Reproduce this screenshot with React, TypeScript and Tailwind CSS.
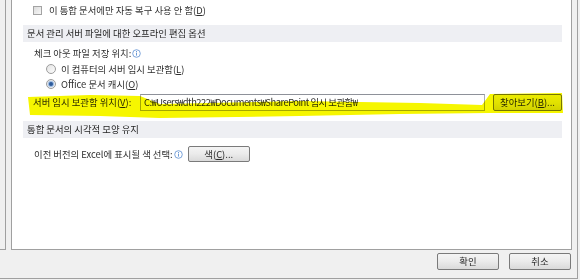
import React from "react";

const font = { fontFamily: "'Noto Sans CJK KR', 'Liberation Sans', sans-serif" };

function Info() {
  return (
    <svg width="9" height="9" viewBox="0 0 9 9" className="ml-[1px] inline-block">
      <circle cx="4.5" cy="4.5" r="3.8" fill="none" stroke="#6d9ad6" strokeWidth="0.9" />
      <rect x="4" y="3.6" width="1" height="3" fill="#6d9ad6" />
      <rect x="4" y="2" width="1" height="1" fill="#6d9ad6" />
    </svg>
  );
}

function Radio({ checked }: { checked?: boolean }) {
  return (
    <span className="flex h-[10px] w-[10px] items-center justify-center rounded-full border border-[#9c9c9c] bg-gradient-to-br from-[#e4e4e4] to-[#fbfbfb]">
      {checked && <span className="h-[4px] w-[4px] rounded-full bg-[#2d5b9a] shadow-[0_0_1px_1px_#8fb3e0]" />}
    </span>
  );
}

function Btn({ children, className = "" }: { children: React.ReactNode; className?: string }) {
  return (
    <div
      className={`flex items-center justify-center rounded-[2px] border border-[#7a7a7a] bg-gradient-to-b from-[#f4f4f4] via-[#ebebeb] to-[#dadada] text-[9.4px] text-[#2a2a2a] ${className}`}
    >
      {children}
    </div>
  );
}

export default function App() {
  return (
    <div className="relative h-[280px] w-[580px] overflow-hidden bg-[#f0f0f0]" style={font}>
      <div className="flex h-[279px] w-[578px] flex-col border-r border-b border-[#a0a0a0]">
        {/* 상단: 왼쪽 목록 + 내용 */}
        <div className="flex h-[250px]">
          <div className="w-[6px] border-r border-b border-[#a0a0a0]" />
          <div className="ml-[5px] flex w-[561px] flex-col border-l border-r border-b border-[#a0a0a0] bg-white pt-[3px] text-[9.4px] text-[#2e2e2e]">
            <div className="flex h-[14px] items-center pl-[21px]">
              <span className="h-[9px] w-[9px] border border-[#a3a3a3] bg-gradient-to-br from-[#dcdcdc] to-[#f7f7f7]" />
              <span className="ml-[7px]">
                이 통합 문서에만 자동 복구 사용 안 함(<u>D</u>)
              </span>
            </div>

            <div className="mt-[8px] mr-[9px] ml-[11px] flex h-[17px] items-center bg-[#eeeff3] pl-[4px] text-[#262626]">
              문서 관리 서버 파일에 대한 오프라인 편집 옵션
            </div>

            <div className="mt-[4px] flex h-[14px] items-center pl-[22px]">
              체크 아웃 파일 저장 위치:
              <Info />
            </div>
            <div className="mt-[2px] flex h-[14px] items-center pl-[34px]">
              <Radio />
              <span className="ml-[5px]">
                이 컴퓨터의 서버 임시 보관함(<u>L</u>)
              </span>
            </div>
            <div className="mt-[1px] flex h-[14px] items-center pl-[34px]">
              <Radio checked />
              <span className="ml-[5px]">
                Office 문서 캐시(<u>O</u>)
              </span>
            </div>

            <div className="mt-[3px] flex h-[17px] items-center pl-[21px]">
              <span className="w-[107px]">
                서버 임시 보관함 위치(<u>V</u>):
              </span>
              <div className="flex h-[17px] w-[345px] items-center border border-[#abadb3] border-t-[#8e9199] pl-[3px] tracking-[-0.5px]">
                C:₩Users₩dth222₩Documents₩SharePoint 임시 보관함₩
              </div>
              <Btn className="ml-[8px] h-[17px] w-[69px]">
                찾아보기(<u>B</u>)...
              </Btn>
            </div>

            <div className="mt-[10px] mr-[9px] ml-[11px] flex h-[17px] items-center bg-[#eeeff3] pl-[4px] text-[#262626]">
              통합 문서의 시각적 모양 유지
            </div>

            <div className="mt-[8px] flex h-[16px] items-center pl-[22px]">
              이전 버전의 Excel에 표시될 색 선택:
              <Info />
              <Btn className="ml-[5px] h-[16px] w-[62px]">
                색(<u>C</u>)...
              </Btn>
            </div>
          </div>
        </div>

        {/* 하단 버튼 */}
        <div className="flex flex-1 items-start justify-end gap-[10px] pt-[3px] pr-[6px]">
          <Btn className="h-[17px] w-[62px]">확인</Btn>
          <Btn className="h-[17px] w-[62px]">취소</Btn>
        </div>
      </div>

      {/* 형광펜 */}
      <svg className="pointer-events-none absolute inset-0 mix-blend-multiply" width="580" height="280">
        <path
          d="M28,97 L90,95 L140,96 L160,104 L300,101 L420,103 L482,105 L490,94 L562,93 L563,113 L490,113 L400,114 L300,116 L160,118 L100,116 L30,115 Z"
          fill="#f6f600"
        />
      </svg>
    </div>
  );
}
